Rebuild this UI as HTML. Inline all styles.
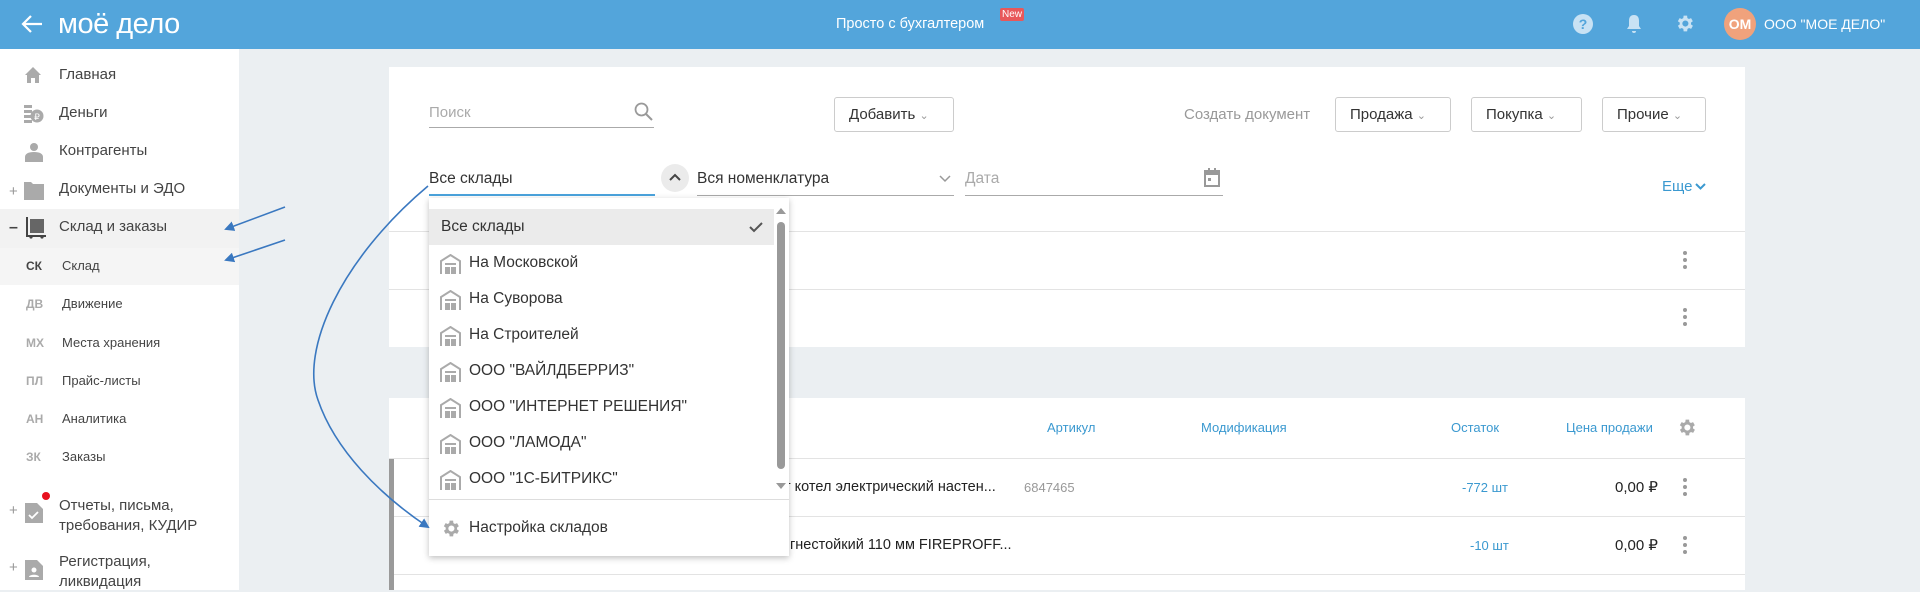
<!DOCTYPE html>
<html><head><meta charset="utf-8"><style>
*{margin:0;padding:0;box-sizing:border-box}
body{width:1920px;height:590px;overflow:hidden;background:#ebeff2;font-family:"Liberation Sans",sans-serif;position:relative;color:#333}
.a{position:absolute;white-space:nowrap}
.hdr{left:0;top:0;width:1920px;height:49px;background:#53a5db}
.side{left:0;top:49px;width:239px;height:541px;background:#fff}
.si{font-size:15px;color:#444;line-height:18px}
.sub{font-size:13px;color:#444}
.ab{font-size:12px;font-weight:bold;color:#aaa}
.card{background:#fff}
.btn{border:1px solid #ccc;border-radius:3px;background:#fff;font-size:15px;color:#333;height:35px;line-height:33px;padding-left:14px}
.hl{height:1px;background:#e3e3e3}
.dd{font-size:15.5px;color:#333}
.kb{width:4px;height:4px;border-radius:2px;background:#999;position:absolute}
.bl{color:#3b99d0}
</style></head><body>
<div class="a hdr"></div>
<svg class="a" style="left:20px;top:13px" width="24" height="22" viewBox="0 0 24 22"><path d="M22 11H3M11 3L3 11l8 8" stroke="#fff" stroke-width="2.2" fill="none"/></svg>
<div class="a" style="left:58px;top:8px;font-size:29px;color:#fff;letter-spacing:-0.5px">моё дело</div>
<div class="a" style="left:836px;top:16px;font-size:14.5px;color:#fff">Просто с бухгалтером</div>
<div class="a" style="left:1000px;top:8px;background:#e8585a;color:#fff;font-size:10px;padding:1px 2px;border-radius:2px">New</div>
<svg class="a" style="left:1573px;top:14px" width="20" height="20"><circle cx="10" cy="10" r="10" fill="#c8e2f4"/><text x="10" y="15" font-size="14" font-weight="bold" fill="#53a5db" text-anchor="middle" font-family="Liberation Sans">?</text></svg>
<svg class="a" style="left:1625px;top:13px" width="18" height="22"><path d="M9 2c-4 0-5 3-5 6v5l-2 3h14l-2-3V8c0-3-1-6-5-6z M7 18h4a2 2 0 0 1-4 0z" fill="#c8e2f4"/></svg>
<svg class="a" style="left:1674px;top:13px" width="21" height="21" viewBox="0 0 24 24"><path fill="#c8e2f4" d="M19.4 13a7.5 7.5 0 0 0 0-2l2.1-1.6-2-3.5-2.5 1a7 7 0 0 0-1.7-1L15 3h-4l-.4 2.9a7 7 0 0 0-1.7 1l-2.5-1-2 3.5L6.6 11a7.5 7.5 0 0 0 0 2l-2.1 1.6 2 3.5 2.5-1a7 7 0 0 0 1.700 1L11 21h4l.4-2.9a7 7 0 0 0 1.7-1l2.5 1 2-3.5zM13 15.5a3.5 3.5 0 1 1 0-7 3.5 3.5 0 0 1 0 7z"/></svg>
<div class="a" style="left:1724px;top:8px;width:32px;height:32px;border-radius:16px;background:#f0a27c;color:#fff;font-weight:bold;font-size:14px;line-height:32px;text-align:center">ОМ</div>
<div class="a" style="left:1764px;top:16px;font-size:14px;color:#fff">ООО "МОЕ ДЕЛО"</div>

<div class="a side"></div>
<div class="a" style="left:0;top:209px;width:239px;height:39px;background:#f2f2f2"></div>
<div class="a" style="left:0;top:248px;width:239px;height:37px;background:#f5f5f5"></div>
<svg class="a" style="left:24px;top:66px" width="18" height="18"><path d="M9 1L1 9h2v8h4v-5h4v5h4V9h2z" fill="#aaa"/></svg>
<svg class="a" style="left:24px;top:104px" width="20" height="20"><rect x="0" y="1" width="8" height="3" fill="#aaa"/><rect x="0" y="6" width="8" height="3" fill="#aaa"/><rect x="0" y="11" width="8" height="3" fill="#aaa"/><rect x="0" y="16" width="8" height="3" fill="#aaa"/><circle cx="13" cy="12" r="6.5" fill="#aaa"/><text x="13" y="16" font-size="9" fill="#fff" text-anchor="middle">₽</text></svg>
<svg class="a" style="left:24px;top:142px" width="20" height="20"><circle cx="10" cy="5" r="4" fill="#aaa"/><path d="M1 20v-5c0-3 3-5 9-5s9 2 9 5v5z" fill="#aaa"/></svg>
<svg class="a" style="left:24px;top:180px" width="20" height="20"><path d="M0 2h7l2 2h11v16H0z" fill="#aaa"/></svg>
<svg class="a" style="left:24px;top:217px" width="22" height="22"><path d="M2 0h2v18h18v2H2z" fill="#444"/><rect x="6" y="2" width="14" height="14" fill="#666"/><circle cx="7" cy="20" r="1.6" fill="#444"/><circle cx="18" cy="20" r="1.6" fill="#444"/></svg>
<div class="a" style="left:9px;top:183px;color:#999;font-size:15px">+</div>
<div class="a" style="left:9px;top:219px;color:#444;font-size:16px;font-weight:bold">–</div>
<div class="a si" style="left:59px;top:66px">Главная</div>
<div class="a si" style="left:59px;top:104px">Деньги</div>
<div class="a si" style="left:59px;top:142px">Контрагенты</div>
<div class="a si" style="left:59px;top:180px">Документы и ЭДО</div>
<div class="a si" style="left:59px;top:218px">Склад и заказы</div>
<div class="a ab" style="left:26px;top:259px;color:#444">СК</div><div class="a sub" style="left:62px;top:258px">Склад</div>
<div class="a ab" style="left:26px;top:297px">ДВ</div><div class="a sub" style="left:62px;top:296px">Движение</div>
<div class="a ab" style="left:26px;top:336px">МХ</div><div class="a sub" style="left:62px;top:335px">Места хранения</div>
<div class="a ab" style="left:26px;top:374px">ПЛ</div><div class="a sub" style="left:62px;top:373px">Прайс-листы</div>
<div class="a ab" style="left:26px;top:412px">АН</div><div class="a sub" style="left:62px;top:411px">Аналитика</div>
<div class="a ab" style="left:26px;top:450px">ЗК</div><div class="a sub" style="left:62px;top:449px">Заказы</div>
<div class="a" style="left:9px;top:502px;color:#999;font-size:15px">+</div>
<svg class="a" style="left:25px;top:503px" width="18" height="20"><path d="M0 0h12l6 6v14H0z" fill="#aaa"/><path d="M4 12l3 3 6-6" stroke="#fff" stroke-width="1.8" fill="none"/></svg>
<div class="a" style="left:42px;top:492px;width:8px;height:8px;border-radius:4px;background:#e8101e"></div>
<div class="a si" style="left:59px;top:496px;line-height:20px">Отчеты, письма,<br>требования, КУДИР</div>
<div class="a" style="left:9px;top:559px;color:#999;font-size:15px">+</div>
<svg class="a" style="left:25px;top:560px" width="18" height="20"><path d="M0 0h12l6 6v14H0z" fill="#aaa"/><circle cx="9" cy="10" r="2.5" fill="#fff"/><path d="M4 17c0-3 10-3 10 0z" fill="#fff"/></svg>
<div class="a si" style="left:59px;top:552px;line-height:20px">Регистрация,<br>ликвидация</div>

<div class="a card" style="left:389px;top:67px;width:1356px;height:280px"></div>
<div class="a" style="left:429px;top:104px;font-size:15px;color:#aaa">Поиск</div>
<div class="a" style="left:429px;top:127px;width:225px;height:1px;background:#aaa"></div>
<svg class="a" style="left:634px;top:102px" width="19" height="19"><circle cx="7.5" cy="7.5" r="6" stroke="#999" stroke-width="1.8" fill="none"/><path d="M12 12l6 6" stroke="#999" stroke-width="2"/></svg>
<div class="a btn" style="left:834px;top:97px;width:120px">Добавить <span style="color:#999;font-size:11px">&#8964;</span></div>
<div class="a" style="left:1184px;top:106px;font-size:15px;color:#999">Создать документ</div>
<div class="a btn" style="left:1335px;top:97px;width:116px">Продажа <span style="color:#999;font-size:11px">&#8964;</span></div>
<div class="a btn" style="left:1471px;top:97px;width:111px">Покупка <span style="color:#999;font-size:11px">&#8964;</span></div>
<div class="a btn" style="left:1602px;top:97px;width:104px">Прочие <span style="color:#999;font-size:11px">&#8964;</span></div>
<div class="a" style="left:429px;top:170px;font-size:15.5px;color:#333">Все склады</div>
<div class="a" style="left:429px;top:194px;width:226px;height:2px;background:#4ba3dc"></div>
<div class="a" style="left:661px;top:164px;width:28px;height:28px;border-radius:14px;background:#ebebeb"></div>
<svg class="a" style="left:669px;top:173px" width="12" height="10"><path d="M1 7l5-5 5 5" stroke="#444" stroke-width="2" fill="none"/></svg>
<div class="a" style="left:697px;top:170px;font-size:15.5px;color:#333">Вся номенклатура</div>
<div class="a" style="left:697px;top:195px;width:257px;height:1px;background:#aaa"></div>
<svg class="a" style="left:939px;top:175px" width="12" height="8"><path d="M1 1l5 5 5-5" stroke="#999" stroke-width="1.5" fill="none"/></svg>
<div class="a" style="left:965px;top:170px;font-size:15.5px;color:#aaa">Дата</div>
<div class="a" style="left:965px;top:195px;width:258px;height:1px;background:#aaa"></div>
<svg class="a" style="left:1204px;top:168px" width="16" height="19"><rect x="1" y="3" width="14" height="15" fill="none" stroke="#999" stroke-width="2"/><rect x="1" y="3" width="14" height="4" fill="#999"/><rect x="4" y="0" width="2" height="4" fill="#999"/><rect x="10" y="0" width="2" height="4" fill="#999"/><rect x="4" y="10" width="3" height="3" fill="#999"/></svg>
<div class="a bl" style="left:1662px;top:178px;font-size:15px">Еще</div>
<svg class="a" style="left:1695px;top:183px" width="11" height="8"><path d="M1 1l4.5 4.5L10 1" stroke="#3b99d0" stroke-width="2" fill="none"/></svg>
<div class="a hl" style="left:389px;top:231px;width:1356px"></div>
<div class="a hl" style="left:389px;top:289px;width:1356px"></div>
<div class="kb" style="left:1683px;top:251px"></div><div class="kb" style="left:1683px;top:258px"></div><div class="kb" style="left:1683px;top:265px"></div>
<div class="kb" style="left:1683px;top:308px"></div><div class="kb" style="left:1683px;top:315px"></div><div class="kb" style="left:1683px;top:322px"></div>

<div class="a card" style="left:389px;top:398px;width:1356px;height:192px"></div>
<div class="a bl" style="left:1047px;top:420px;font-size:13px">Артикул</div>
<div class="a bl" style="left:1201px;top:420px;font-size:13px">Модификация</div>
<div class="a bl" style="left:1451px;top:420px;font-size:13px">Остаток</div>
<div class="a bl" style="left:1566px;top:420px;font-size:13px">Цена продажи</div>
<svg class="a" style="left:1676px;top:417px" width="21" height="21" viewBox="0 0 24 24"><path fill="#aaa" d="M19.4 13a7.5 7.5 0 0 0 0-2l2.1-1.6-2-3.5-2.5 1a7 7 0 0 0-1.7-1L15 3h-4l-.4 2.9a7 7 0 0 0-1.7 1l-2.5-1-2 3.5L6.6 11a7.5 7.5 0 0 0 0 2l-2.1 1.6 2 3.5 2.5-1a7 7 0 0 0 1.7 1L11 21h4l.4-2.9a7 7 0 0 0 1.7-1l2.5 1 2-3.5zM13 15.5a3.5 3.5 0 1 1 0-7 3.5 3.5 0 0 1 0 7z"/></svg>
<div class="a hl" style="left:389px;top:458px;width:1356px"></div>
<div class="a hl" style="left:389px;top:516px;width:1356px"></div>
<div class="a hl" style="left:389px;top:574px;width:1356px"></div>
<div class="a" style="left:389px;top:459px;width:5px;height:131px;background:#9a9a9a"></div>
<div class="a" style="left:784px;top:479px;font-size:14.5px;color:#222">т котел электрический настен...</div>
<div class="a" style="left:1024px;top:480px;font-size:13px;color:#999">6847465</div>
<div class="a bl" style="left:1462px;top:480px;font-size:13px">-772 шт</div>
<div class="a" style="left:1615px;top:478px;font-size:15px;color:#222">0,00 ₽</div>
<div class="kb" style="left:1683px;top:478px"></div><div class="kb" style="left:1683px;top:485px"></div><div class="kb" style="left:1683px;top:492px"></div>
<div class="a" style="left:790px;top:537px;font-size:14.5px;color:#222">гнестойкий 110 мм FIREPROFF...</div>
<div class="a bl" style="left:1470px;top:538px;font-size:13px">-10 шт</div>
<div class="a" style="left:1615px;top:536px;font-size:15px;color:#222">0,00 ₽</div>
<div class="kb" style="left:1683px;top:536px"></div><div class="kb" style="left:1683px;top:543px"></div><div class="kb" style="left:1683px;top:550px"></div>

<!-- dropdown -->
<div class="a" style="left:429px;top:198px;width:360px;height:358px;background:#fff;box-shadow:0 2px 6px rgba(0,0,0,.25)"></div>
<div class="a" style="left:429px;top:209px;width:345px;height:36px;background:#ebebeb"></div>
<div class="a dd" style="left:441px;top:218px">Все склады</div>
<svg class="a" style="left:749px;top:222px" width="14" height="11"><path d="M1 5l4 4 8-8" stroke="#555" stroke-width="2" fill="none"/></svg>
<div class="a" style="left:777px;top:222px;width:8px;height:247px;border-radius:4px;background:#999"></div>
<svg class="a" style="left:776px;top:208px" width="10" height="6"><path d="M0 6L5 0l5 6z" fill="#999"/></svg>
<svg class="a" style="left:776px;top:483px" width="10" height="6"><path d="M0 0l5 6 5-6z" fill="#999"/></svg>
<div class="a" style="left:429px;top:499px;width:360px;height:1px;background:#ddd"></div>
<svg class="a" style="left:440px;top:254px;" width="21" height="21" viewBox="0 0 21 21"><path d="M1 20V7L10.5 1 20 7v13" stroke="#aaa" stroke-width="2" fill="none"/><rect x="5" y="9" width="11" height="2" fill="#aaa"/><rect x="5" y="13" width="5" height="7" fill="#aaa"/><rect x="11" y="13" width="5" height="7" fill="#aaa"/></svg>
<div class="a dd" style="left:469px;top:254px">На Московской</div>
<svg class="a" style="left:440px;top:290px;" width="21" height="21" viewBox="0 0 21 21"><path d="M1 20V7L10.5 1 20 7v13" stroke="#aaa" stroke-width="2" fill="none"/><rect x="5" y="9" width="11" height="2" fill="#aaa"/><rect x="5" y="13" width="5" height="7" fill="#aaa"/><rect x="11" y="13" width="5" height="7" fill="#aaa"/></svg>
<div class="a dd" style="left:469px;top:290px">На Суворова</div>
<svg class="a" style="left:440px;top:326px;" width="21" height="21" viewBox="0 0 21 21"><path d="M1 20V7L10.5 1 20 7v13" stroke="#aaa" stroke-width="2" fill="none"/><rect x="5" y="9" width="11" height="2" fill="#aaa"/><rect x="5" y="13" width="5" height="7" fill="#aaa"/><rect x="11" y="13" width="5" height="7" fill="#aaa"/></svg>
<div class="a dd" style="left:469px;top:326px">На Строителей</div>
<svg class="a" style="left:440px;top:362px;" width="21" height="21" viewBox="0 0 21 21"><path d="M1 20V7L10.5 1 20 7v13" stroke="#aaa" stroke-width="2" fill="none"/><rect x="5" y="9" width="11" height="2" fill="#aaa"/><rect x="5" y="13" width="5" height="7" fill="#aaa"/><rect x="11" y="13" width="5" height="7" fill="#aaa"/></svg>
<div class="a dd" style="left:469px;top:362px">ООО "ВАЙЛДБЕРРИЗ"</div>
<svg class="a" style="left:440px;top:398px;" width="21" height="21" viewBox="0 0 21 21"><path d="M1 20V7L10.5 1 20 7v13" stroke="#aaa" stroke-width="2" fill="none"/><rect x="5" y="9" width="11" height="2" fill="#aaa"/><rect x="5" y="13" width="5" height="7" fill="#aaa"/><rect x="11" y="13" width="5" height="7" fill="#aaa"/></svg>
<div class="a dd" style="left:469px;top:398px">ООО "ИНТЕРНЕТ РЕШЕНИЯ"</div>
<svg class="a" style="left:440px;top:434px;" width="21" height="21" viewBox="0 0 21 21"><path d="M1 20V7L10.5 1 20 7v13" stroke="#aaa" stroke-width="2" fill="none"/><rect x="5" y="9" width="11" height="2" fill="#aaa"/><rect x="5" y="13" width="5" height="7" fill="#aaa"/><rect x="11" y="13" width="5" height="7" fill="#aaa"/></svg>
<div class="a dd" style="left:469px;top:434px">ООО "ЛАМОДА"</div>
<svg class="a" style="left:440px;top:470px;" width="21" height="21" viewBox="0 0 21 21"><path d="M1 20V7L10.5 1 20 7v13" stroke="#aaa" stroke-width="2" fill="none"/><rect x="5" y="9" width="11" height="2" fill="#aaa"/><rect x="5" y="13" width="5" height="7" fill="#aaa"/><rect x="11" y="13" width="5" height="7" fill="#aaa"/></svg>
<div class="a dd" style="left:469px;top:470px">ООО "1С-БИТРИКС"</div>
<svg class="a" style="left:440px;top:518px" width="21" height="21" viewBox="0 0 24 24"><path fill="#aaa" d="M19.4 13a7.5 7.5 0 0 0 0-2l2.1-1.6-2-3.5-2.5 1a7 7 0 0 0-1.7-1L15 3h-4l-.4 2.9a7 7 0 0 0-1.7 1l-2.5-1-2 3.5L6.6 11a7.5 7.5 0 0 0 0 2l-2.1 1.6 2 3.5 2.5-1a7 7 0 0 0 1.7 1L11 21h4l.4-2.9a7 7 0 0 0 1.7-1l2.5 1 2-3.5zM13 15.5a3.5 3.5 0 1 1 0-7 3.5 3.5 0 0 1 0 7z"/></svg>
<div class="a dd" style="left:469px;top:519px">Настройка складов</div>

<svg class="a" style="left:0;top:0" width="1920" height="590">
<defs><marker id="m" markerWidth="10" markerHeight="10" refX="8" refY="5" orient="auto" markerUnits="userSpaceOnUse"><path d="M0 0L10 5 0 10z" fill="#3a78c0"/></marker></defs>
<g stroke="#3a78c0" stroke-width="1.6" fill="none">
<path d="M285 207L226 229" marker-end="url(#m)"/>
<path d="M285 240L226 260" marker-end="url(#m)"/>
<path d="M428 186C340 260 300 350 318 400C335 450 380 495 428 527" marker-end="url(#m)"/>
</g></svg>
</body></html>
